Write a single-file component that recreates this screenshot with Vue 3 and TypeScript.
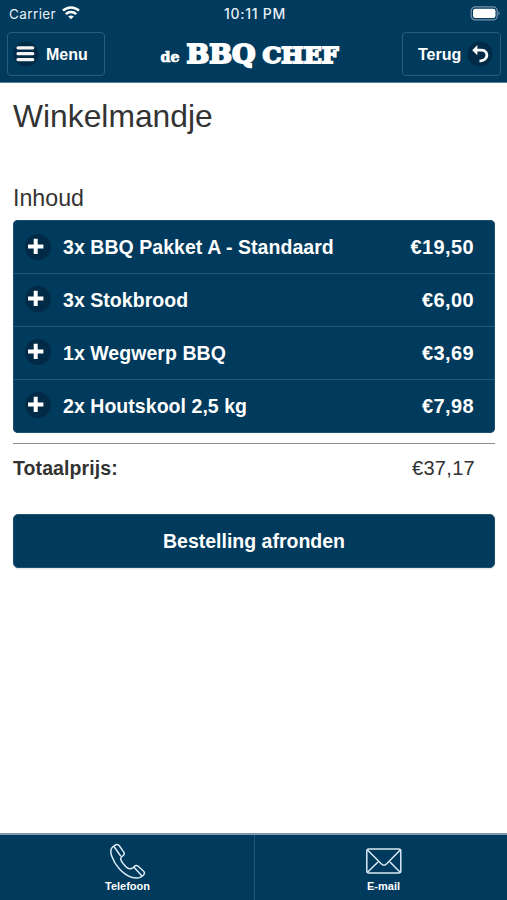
<script setup lang="ts">
interface CartItem {
  amount: number
  name: string
  price: string
}

const items: CartItem[] = [
  { amount: 3, name: 'BBQ Pakket A - Standaard', price: '€19,50' },
  { amount: 3, name: 'Stokbrood', price: '€6,00' },
  { amount: 1, name: 'Wegwerp BBQ', price: '€3,69' },
  { amount: 2, name: 'Houtskool 2,5 kg', price: '€7,98' },
]
</script>

<template>
  <div class="screen">
    <header class="header">
      <div class="status">
        <div class="carrier">
          <span>Carrier</span>
          <svg class="wifi" width="18" height="14" viewBox="0 0 18 14">
            <path d="M1 4.700C5.500.3 12.500.3 17 4.700" />
            <path d="M3.800 8.100C6.800 5.300 11.200 5.300 14.200 8.100" />
            <path class="solid" d="M9 13.300L6.200 10.500C7.700 9.100 10.300 9.100 11.800 10.500Z" />
          </svg>
        </div>
        <span class="time">10:11 PM</span>
        <svg class="battery" width="31" height="15" viewBox="0 0 31 15">
          <rect class="shell" x="1.200" y=".9" width="26" height="13" rx="4" />
          <rect class="charge" x="3" y="2.800" width="22.500" height="9.200" rx="2.200" />
          <path class="nub" d="M28.500 5.300Q31 7.400 28.500 9.500Z" />
        </svg>
      </div>
      <div class="bar">
        <button class="nav menu">
          <svg class="disc" width="26" height="26" viewBox="0 0 26 26">
            <circle cx="13" cy="13" r="12.500" />
            <path class="lines" d="M5 6.800H19.800M5 12.700H19.800M5 18.600H19.800" />
          </svg>
          <span>Menu</span>
        </button>
        <svg class="logo" width="184" height="32" viewBox="0 0 184 32">
          <text class="de" x="2.500" y="23.500" textLength="19" lengthAdjust="spacingAndGlyphs">de</text>
          <text class="bbq" x="28.500" y="24.500" textLength="69" lengthAdjust="spacingAndGlyphs">BBQ</text>
          <text class="chef" x="104.500" y="24.500" textLength="76" lengthAdjust="spacingAndGlyphs">CHEF</text>
        </svg>
        <button class="nav back">
          <span>Terug</span>
          <svg class="disc" width="26" height="26" viewBox="0 0 26 26">
            <circle cx="13" cy="13" r="12.500" />
            <path class="arrow" d="M9 9.200H14.500C22 9.200 22 19.700 12.500 20.100" />
            <path class="tip" d="M5.200 9.200L10.400 4.100V14.300Z" />
          </svg>
        </button>
      </div>
    </header>

    <main class="content">
      <h1>Winkelmandje</h1>
      <h2>Inhoud</h2>
      <ul class="cart">
        <li v-for="item in items" :key="item.name">
          <svg class="disc" width="26" height="26" viewBox="0 0 26 26">
            <circle cx="13" cy="13" r="13" />
            <path class="plus" d="M3 12.400H18.400M10.700 4.700V20.100" />
          </svg>
          <span class="name">{{ item.amount }}x {{ item.name }}</span>
          <span class="price">{{ item.price }}</span>
        </li>
      </ul>
      <div class="total">
        <strong>Totaalprijs:</strong>
        <span>€37,17</span>
      </div>
      <button class="checkout">Bestelling afronden</button>
    </main>

    <footer class="footer">
      <a class="contact">
        <svg width="38" height="38" viewBox="0 0 38 38">
          <path d="M5.500 3.600C1.600 5.600.8 9 2.800 14.200C6 23.500 13.500 31.800 22.500 35.300C28.500 37 32 36.300 34.800 32.600C36 31 35.600 30 34.400 29L29.200 24.200C27.900 23 26.400 23.200 25.400 24.400C23.600 27 20.500 27.600 18 25.700C15.200 23.200 12.700 20.300 11.800 17.600C11.300 15.800 12 14.700 14 13.600C15.500 12.600 15.600 11.300 14.600 9.900L10.300 3.700C9 1.900 7.300 2 5.500 3.600Z" />
          <path d="M5 4.500L11.800 14.300M25 25.200L33 34" />
        </svg>
        <span>Telefoon</span>
      </a>
      <a class="contact">
        <svg width="38" height="38" viewBox="0 0 38 38">
          <rect x="1.800" y="7" width="34" height="24" rx="2" />
          <path d="M2.500 8L16.500 22Q19 24.500 21.500 22L35.200 8M2.500 30.200L13 20M35.200 30.200L25 20" />
        </svg>
        <span>E-mail</span>
      </a>
    </footer>
  </div>
</template>

<style>
body {
  margin: 0;
}
</style>

<style scoped>
.screen {
  display: flex;
  flex-direction: column;
  height: 900px;
  background: #fff;
  color: #333;
  font-family: "Liberation Sans", Arial, sans-serif;
}
.header {
  box-sizing: border-box;
  height: 83px;
  background: #003a5d;
  border-bottom: 1px solid #56809b;
  color: #fff;
}
.status {
  display: grid;
  grid-template-columns: 1fr auto 1fr;
  align-items: center;
  height: 27px;
  padding: 0 6px 0 9px;
  font-family: Inter, sans-serif;
  font-size: 13.5px;
  color: #e7f0f6;
}
.carrier {
  display: flex;
  align-items: center;
  gap: 6px;
  letter-spacing: 0.4px;
}
.wifi {
  margin-top: -2px;
  fill: none;
  stroke: #fff;
  stroke-width: 2.5;
}
.wifi .solid {
  fill: #fff;
  stroke: none;
}
.time {
  font-size: 14px;
  font-weight: 500;
  letter-spacing: 0.75px;
}
.battery {
  justify-self: end;
  margin-top: -1px;
}
.shell {
  fill: none;
  stroke: #7896aa;
  stroke-width: 1.2;
}
.charge {
  fill: #fff;
}
.nub {
  fill: #7896aa;
}
.bar {
  display: flex;
  justify-content: space-between;
  padding: 5px 6px 0 7px;
}
.nav {
  box-sizing: border-box;
  display: flex;
  align-items: center;
  height: 44px;
  margin: 0;
  border: 1px solid #2a5b7a;
  border-radius: 4px;
  background: transparent;
  color: #fff;
  font: bold 16px "Liberation Sans", Arial, sans-serif;
}
.nav span {
  padding-top: 2px;
}
.menu {
  width: 98px;
  gap: 7px;
  padding: 0 0 0 5px;
}
.back {
  width: 99px;
  gap: 6px;
  padding: 0 0 0 15px;
}
.disc {
  flex: none;
}
.disc circle {
  fill: #002a45;
}
.lines {
  stroke: #f4f4f4;
  stroke-width: 3.2;
  stroke-linecap: round;
}
.lines,
.arrow {
  fill: none;
}
.arrow {
  stroke: #fff;
  stroke-width: 2.8;
}
.tip {
  fill: #fff;
}
.logo {
  margin: 6px 8px 0 0;
  fill: #fff;
  stroke: #fff;
  font-family: "DejaVu Serif", serif;
  font-weight: bold;
}
.de {
  font-size: 14px;
  stroke-width: 0.7;
}
.bbq {
  font-size: 26px;
  stroke-width: 2;
}
.chef {
  font-size: 22.5px;
  stroke-width: 1.9;
}
.content {
  flex: 1;
  padding: 0 12px 0 13px;
}
h1,
h2 {
  margin: 0;
  font-weight: normal;
}
h1 {
  padding-top: 14px;
  font-size: 31.8px;
  line-height: 38px;
}
h2 {
  padding-top: 49px;
  font-size: 23.2px;
  line-height: 28px;
}
.cart {
  margin: 8px 0 0;
  padding: 0 0 1px;
  list-style: none;
  overflow: hidden;
  border-radius: 5px;
  background: #003a5d;
  box-shadow: inset 0 0 0 1px #1d5070;
  color: #fff;
  font-size: 19.5px;
  font-weight: bold;
}
.cart li {
  box-sizing: border-box;
  display: flex;
  align-items: center;
  height: 53px;
  padding: 2px 21px 0 12px;
}
.cart li + li {
  padding-top: 0;
  border-top: 1px solid #24557a;
}
.name {
  flex: 1;
  margin-left: 12px;
  letter-spacing: 0.05px;
}
.cart .disc {
  margin-top: -2px;
}
.plus {
  stroke: #fff;
  stroke-width: 4;
}
.price {
  font-size: 20px;
  letter-spacing: 0.4px;
}
.total {
  display: flex;
  justify-content: space-between;
  align-items: center;
  height: 48px;
  margin-top: 10px;
  padding: 0 20px 0 0;
  border-top: 1px solid #8b8f96;
  font-size: 20px;
}
.total span {
  letter-spacing: 0.3px;
}
.total strong {
  font-size: 19.5px;
  letter-spacing: 0.1px;
}
.checkout {
  box-sizing: border-box;
  width: 100%;
  height: 54px;
  margin: 22px 0 0;
  padding: 0;
  border: 1px solid #1d5070;
  border-radius: 5px;
  background: #003a5d;
  box-shadow: 0 1px 2px rgba(0, 0, 0, 0.12);
  color: #fff;
  font: bold 19.5px "Liberation Sans", Arial, sans-serif;
}
.footer {
  box-sizing: border-box;
  display: grid;
  grid-template-columns: 255px 1fr;
  height: 67px;
  border-top: 2px solid #8099b0;
  background: #003a5d;
  color: #fff;
  font-size: 11px;
  font-weight: bold;
}
.contact {
  display: flex;
  flex-direction: column;
  align-items: center;
  padding-top: 7px;
  line-height: 13px;
}
.contact + .contact {
  border-left: 1px solid #24557a;
  margin-left: -1px;
  padding-left: 5px;
}
.contact svg {
  fill: none;
  stroke: #dceaf4;
  stroke-width: 1.5;
  stroke-linejoin: round;
}
</style>
